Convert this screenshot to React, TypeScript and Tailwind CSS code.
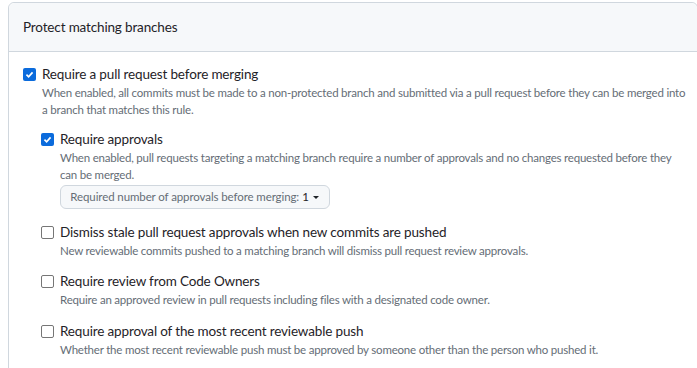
import React from "react";

const font = { fontFamily: 'Lato, "Liberation Sans", sans-serif' };

function Check({ checked }: { checked?: boolean }) {
  return checked ? (
    <span className="mt-[4px] flex h-[13px] w-[13px] shrink-0 items-center justify-center rounded-[2px] bg-[#0b6bdc]">
      <svg width="9" height="9" viewBox="0 0 10 10">
        <path d="M1.6 5.2 L4 7.5 L8.4 2.6" fill="none" stroke="#fff" strokeWidth="1.9" />
      </svg>
    </span>
  ) : (
    <span className="mt-[4px] h-[13px] w-[13px] shrink-0 rounded-[2px] border border-[#767676] bg-white" />
  );
}

function Item({
  checked,
  label,
  desc,
  children,
  className = "",
}: {
  checked?: boolean;
  label: string;
  desc: string;
  children?: React.ReactNode;
  className?: string;
}) {
  return (
    <div className={"flex gap-[6px] " + className}>
      <Check checked={checked} />
      <div className="min-w-0 flex-1">
        <div className="text-[13.5px] leading-[20px] tracking-[-0.15px] text-[#1f2328]">{label}</div>
        <div className="text-[11.5px] leading-[17px] tracking-[-0.2px] text-[#656d76]">{desc}</div>
        {children}
      </div>
    </div>
  );
}

export default function App() {
  return (
    <div className="h-[368px] w-[697px] overflow-hidden bg-white" style={font}>
      <div className="ml-[8px] mt-[2px] w-[690px] rounded-t-[6px] border border-[#d0d7de]">
        <div className="flex h-[49px] items-center rounded-t-[6px] border-b border-[#d0d7de] bg-[#f6f8fa] px-[14px] text-[13.5px] tracking-[-0.15px] text-[#1f2328]">
          Protect matching branches
        </div>
        <div className="pl-[14px] pr-[6px] pt-[12px] pb-[20px]">
          <Item
            checked
            label="Require a pull request before merging"
            desc="When enabled, all commits must be made to a non-protected branch and submitted via a pull request before they can be merged into a branch that matches this rule."
          >
            <div className="mt-[11px] flex flex-col gap-[12px] -ml-[1px] pr-[14px]">
              <Item
                checked
                label="Require approvals"
                desc="When enabled, pull requests targeting a matching branch require a number of approvals and no changes requested before they can be merged."
              >
                <button className="mt-[2px] flex h-[24px] w-[270px] items-center justify-center whitespace-nowrap rounded-[6px] border border-[#d0d7de] bg-[#f6f8fa] text-[11.5px] tracking-[-0.1px] text-[#656d76]">
                  <span>Required number of approvals before merging:</span>
                  <span className="ml-[3px] text-[#1f2328]">1</span>
                  <svg className="ml-[3px]" width="8" height="8" viewBox="0 0 8 8">
                    <path d="M1 3 L4 6 L7 3 Z" fill="#1f2328" />
                  </svg>
                </button>
              </Item>
              <Item
                className="mt-[1px]"
                label="Dismiss stale pull request approvals when new commits are pushed"
                desc="New reviewable commits pushed to a matching branch will dismiss pull request review approvals."
              />
              <Item
                label="Require review from Code Owners"
                desc="Require an approved review in pull requests including files with a designated code owner."
              />
              <Item
                className="mt-[1px]"
                label="Require approval of the most recent reviewable push"
                desc="Whether the most recent reviewable push must be approved by someone other than the person who pushed it."
              />
            </div>
          </Item>
        </div>
      </div>
    </div>
  );
}
